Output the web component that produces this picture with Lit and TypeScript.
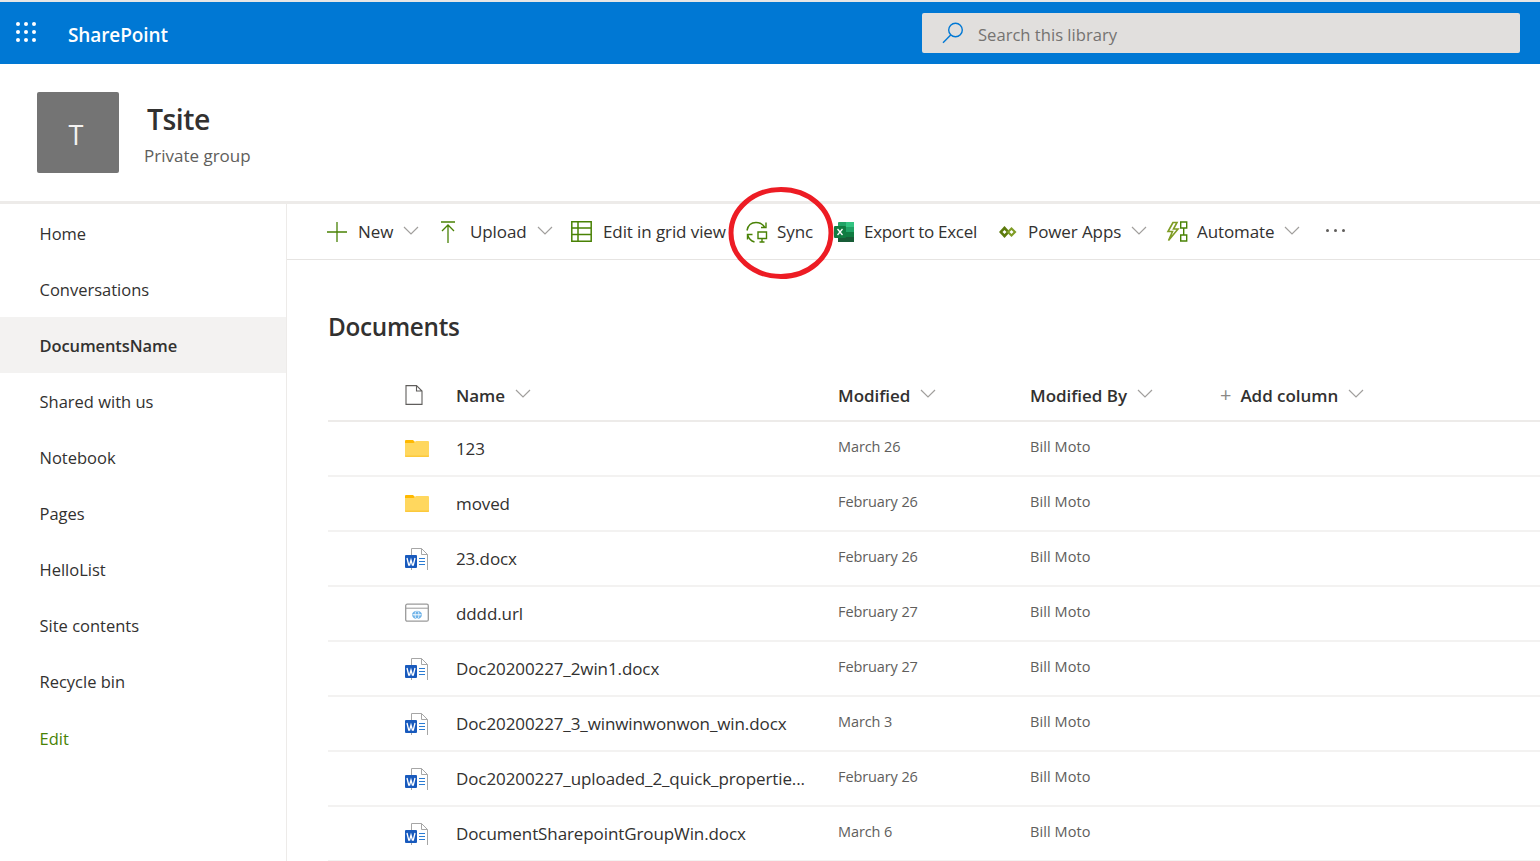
import { LitElement, html, css, svg } from 'lit';
import { customElement } from 'lit/decorators.js';

const NAV = ['Home', 'Conversations', 'DocumentsName', 'Shared with us', 'Notebook', 'Pages', 'HelloList', 'Site contents', 'Recycle bin'];

const ROWS = [
  { icon: 'folder', name: '123', modified: 'March 26' },
  { icon: 'folder', name: 'moved', modified: 'February 26' },
  { icon: 'word', name: '23.docx', modified: 'February 26' },
  { icon: 'url', name: 'dddd.url', modified: 'February 27' },
  { icon: 'word', name: 'Doc20200227_2win1.docx', modified: 'February 27' },
  { icon: 'word', name: 'Doc20200227_3_winwinwonwon_win.docx', modified: 'March 3' },
  { icon: 'word', name: 'Doc20200227_uploaded_2_quick_propertie...', modified: 'February 26' },
  { icon: 'word', name: 'DocumentSharepointGroupWin.docx', modified: 'March 6' },
];

const chevron = html`<svg class="chev" width="16" height="9" viewBox="0 0 16 9" fill="none" stroke="#a19f9d" stroke-width="1.2"><path d="M1 1l7 7 7-7"/></svg>`;

const fileIcons: Record<string, unknown> = {
  folder: svg`<path d="M0 4V3a1 1 0 0 1 1-1h7l3 3v2H0z" fill="#ffb900"/><path d="M0 5h8.500l2.500-2h12a1 1 0 0 1 1 1v14a1 1 0 0 1-1 1H1a1 1 0 0 1-1-1z" fill="#ffd75e"/><path d="M0 17.500h24V18a1 1 0 0 1-1 1H1a1 1 0 0 1-1-1z" fill="#fcc93c"/>`,
  word: svg`<path d="M6.500.500h10l6 6v16h-16z" fill="#fff" stroke="#a6a6a6"/><path d="M16.500.500v6h6" fill="none" stroke="#a6a6a6"/><path d="M14 10.500h6M14 13.500h6M14 16.500h6" stroke="#2b7cd3" stroke-width="1.200"/><rect x="0" y="7" width="12" height="13" rx="1" fill="#185abd"/><path d="M2 10l1.700 7h.9L6 12l1.400 5h.9L10 10" fill="none" stroke="#fff" stroke-width="1.300"/>`,
  url: svg`<rect x=".7" y="1.200" width="22.600" height="17" rx="1.500" fill="#fff" stroke="#9a9a9a" stroke-width="1.300"/><path d="M1 5.200h22" stroke="#9a9a9a"/><ellipse cx="12" cy="11.800" rx="5" ry="4" fill="#6db2e8"/><path d="M7.500 11.800h9" stroke="#fff"/><ellipse cx="12" cy="11.800" rx="2" ry="4" fill="none" stroke="#fff" stroke-width=".7"/>`,
};

@customElement('app-root')
export class AppRoot extends LitElement {
  static override styles = css`
    :host {
      display: block;
      height: 861px;
      overflow: hidden;
      position: relative;
      background: #fff;
      color: #323130;
      font-family: 'Open Sans', 'Liberation Sans', sans-serif;
    }
    svg { display: block; flex: none; }
    .suite {
      height: 62px;
      margin-top: 2px;
      background: #0078d4;
      box-shadow: 0 -2px 0 #e6e6e6;
      display: flex;
      align-items: center;
      color: #fff;
    }
    .waffle {
      margin-left: 16px;
      display: grid;
      grid-template-columns: repeat(3, 4px);
      gap: 4px;
      margin-top: -3px;
    }
    .waffle i { width: 4px; height: 4px; border-radius: 50%; background: #fff; }
    .brand { margin-left: 32px; margin-top: 3px; font-size: 19px; font-weight: 600; letter-spacing: -0.1px; }
    .search {
      margin-left: auto;
      margin-right: 20px;
      width: 598px;
      height: 40px;
      border-radius: 2px;
      background: #e1dfdd;
      display: flex;
      align-items: center;
      padding-left: 20px;
      box-sizing: border-box;
      gap: 14px;
      font-size: 16.6px;
      color: #757371;
    }
    .search span { margin-top: 2px; }
    .site {
      height: 137px;
      display: flex;
      align-items: center;
      padding-left: 37px;
      box-sizing: border-box;
    }
    .logo {
      width: 82px;
      height: 81px;
      border-radius: 2px;
      background: #747474;
      color: #f3f2f1;
      display: flex;
      align-items: center;
      justify-content: center;
      box-sizing: border-box;
      padding: 4px 4px 0 0;
      font-size: 27px;
    }
    .site-text { margin-left: 25px; margin-top: 6px; }
    .site-name { font-size: 28.4px; font-weight: 600; line-height: 40px; margin-left: 3px; letter-spacing: -0.5px; }
    .site-sub { font-size: 17px; line-height: 33px; color: #605e5c; }
    .body {
      display: flex;
      border-top: 3px solid #edebe9;
      height: 660px;
    }
    .nav { width: 286px; flex: none; border-right: 1px solid #edebe9; padding-top: 1px; }
    .nav-item {
      height: 56.1px;
      display: flex;
      align-items: center;
      padding-left: 39.500px;
      font-size: 16.5px;
    }
    .nav-item.active { background: #f3f2f1; font-weight: 600; letter-spacing: -0.1px; }
    .nav-item.edit { color: #498205; margin-top: 1px; }
    .main { flex: 1; min-width: 0; }
    .commands {
      height: 56px;
      box-sizing: border-box;
      border-bottom: 1px solid #e6e4e2;
      display: flex;
      align-items: center;
      padding-left: 40px;
      font-size: 17px;
      letter-spacing: -0.1px;
      white-space: nowrap;
    }
    .cmd { display: flex; align-items: center; flex: none; }
    .cmd .label { margin-left: 11px; }
    .cmd .chev { margin-left: 10px; margin-top: -2px; }
    .c-new { width: 113px; }
    .c-upload { width: 131px; }
    .c-upload .label { margin-left: 14px; }
    .c-grid { width: 175px; }
    .c-sync { width: 88px; }
    .c-sync .label { margin-left: 9px; }
    .c-excel { width: 165px; }
    .c-excel .label { margin-left: 10px; letter-spacing: -0.3px; }
    .c-apps { width: 167px; }
    .c-auto { width: 160px; }
    .c-auto .label { margin-left: 9px; }
    .dots { display: flex; gap: 5px; margin-top: -2px; }
    .dots i { width: 3px; height: 3px; border-radius: 50%; background: #605e5c; }
    .content { padding-left: 41px; }
    h1 { margin: 0; font-size: 24.3px; font-weight: 600; height: 110px; box-sizing: border-box; padding-top: 49px; line-height: 36px; letter-spacing: -0.3px; }
    .row {
      display: grid;
      grid-template-columns: 77px 51px 382px 192px 190px 1fr;
      align-items: center;
      height: 55px;
      border-bottom: 2px solid #f3f2f1;
      box-sizing: border-box;
    }
    .row.head { height: 52px; border-bottom-color: #edebe9; font-size: 17px; font-weight: 600; }
    .row.head .cell { display: flex; align-items: center; gap: 10px; letter-spacing: -0.03px; }
    .row.head .chev { margin-top: -3px; }
    .plus { font-weight: 400; color: #8a8886; margin-right: -1px; font-size: 20px; line-height: 1; }
    .name { grid-column: 3; font-size: 17px; white-space: nowrap; letter-spacing: -0.1px; }
    .meta { font-size: 14.5px; color: #605e5c; letter-spacing: -0.1px; padding-bottom: 4px; }
    .by { letter-spacing: 0.1px; }
    .row .icon { grid-column: 2; }
    .ring { position: absolute; left: 724.500px; top: 184px; pointer-events: none; }
  `;

  private renderNav() {
    return html`<nav class="nav">
      ${NAV.map((n) => html`<div class="nav-item ${n === 'DocumentsName' ? 'active' : ''}">${n}</div>`)}
      <div class="nav-item edit">Edit</div>
    </nav>`;
  }

  private renderCommands() {
    return html`<div class="commands">
      <div class="cmd c-new">
        <svg width="20" height="20" viewBox="0 0 20 20" stroke="#498205" stroke-width="1.300"><path d="M10 0v20M0 10h20"/></svg>
        <span class="label">New</span>${chevron}
      </div>
      <div class="cmd c-upload">
        <svg width="16" height="22" viewBox="0 0 16 22" fill="none" stroke="#498205" stroke-width="1.300"><path d="M1 1h14M8 22V4M2 10l6-6 6 6"/></svg>
        <span class="label">Upload</span>${chevron}
      </div>
      <div class="cmd c-grid">
        <svg width="21" height="21" viewBox="0 0 21 21" fill="none" stroke="#498205" stroke-width="1.500"><path d="M.8.8h19.400v19.400H.8zM.8 7h19.400M.8 13.500h19.400M7 .8v19.400"/></svg>
        <span class="label">Edit in grid view</span>
      </div>
      <div class="cmd c-sync">
        <svg width="22" height="22" viewBox="0 0 22 22" fill="none" stroke="#498205" stroke-width="1.400"><path d="M1 9.500C2 4 6 1.500 10 1.500c3.500 0 6.500 1.500 8.500 4.500M20 1.500V6.500h-5M6.500 13.500H1.500v5M1.500 13.500c1 3.500 3.500 6.500 7 7.500"/><path d="M12 11h8.500v6.500H12zM16 17.500v3M13.500 21h5"/></svg>
        <span class="label">Sync</span>
      </div>
      <div class="cmd c-excel">
        <svg width="20" height="20" viewBox="0 0 20 20">
          <rect x="4" y="0" width="16" height="20" rx="1" fill="#21a366"/>
          <rect x="12" y="0" width="8" height="5" fill="#33c481"/>
          <rect x="12" y="5" width="8" height="5" fill="#21a366"/>
          <rect x="4" y="10" width="8" height="10" fill="#185c37"/>
          <rect x="12" y="10" width="8" height="5" fill="#107c41"/>
          <rect x="12" y="15" width="8" height="5" fill="#185c37"/>
          <rect x="0" y="4" width="12" height="12" rx="1" fill="#107c41"/>
          <path d="M3.500 7l5 6M8.500 7l-5 6" stroke="#fff" stroke-width="1.300"/>
        </svg>
        <span class="label">Export to Excel</span>
      </div>
      <div class="cmd c-apps">
        <svg width="18" height="12" viewBox="0 0 18 12">
          <path d="M5.500 0l5.500 6-5.500 6L0 6z" fill="#5c7a0c"/><path d="M12.500 1l5 5-5 5-5-5z" fill="#7f9c25"/><path d="M5.500 4l2 2-2 2-2-2zM12.500 4l2 2-2 2-2-2z" fill="#fff"/>
        </svg>
        <span class="label">Power Apps</span>${chevron}
      </div>
      <div class="cmd c-auto">
        <svg width="22" height="21" viewBox="0 0 22 21" fill="none" stroke="#498205" stroke-width="1.400"><path d="M7 1.500L2 10.500h4.500L2.500 19.500 12 8H7.500L11 1.500z" stroke="#7f9c25" stroke-width="1.600"/><path d="M14.700 1h6v6h-6zM14.700 14h6v6h-6zM17.700 7v7"/></svg>
        <span class="label">Automate</span>${chevron}
      </div>
      <div class="dots"><i></i><i></i><i></i></div>
    </div>`;
  }

  private renderTable() {
    return html`<div class="row head">
        <span></span>
        <svg class="icon" width="18" height="20" viewBox="0 0 18 20" fill="#fff" stroke="#605e5c" stroke-width="1.100"><path d="M1 .6h10.500L17 6v13.400H1zM11.500.6V6H17"/></svg>
        <div class="cell">Name ${chevron}</div>
        <div class="cell">Modified ${chevron}</div>
        <div class="cell">Modified By ${chevron}</div>
        <div class="cell"><span class="plus">+</span> Add column ${chevron}</div>
      </div>
      ${ROWS.map(
        (r) => html`<div class="row">
          <svg class="icon" width="24" height="22" viewBox="0 0 24 22">${fileIcons[r.icon]}</svg>
          <span class="name">${r.name}</span>
          <span class="meta">${r.modified}</span>
          <span class="meta by">Bill Moto</span>
        </div>`
      )}`;
  }

  protected override render() {
    return html`
      <header class="suite">
        <div class="waffle">${Array.from({ length: 9 }, () => html`<i></i>`)}</div>
        <div class="brand">SharePoint</div>
        <div class="search">
          <svg width="22" height="22" viewBox="0 0 22 22" fill="none" stroke="#0078d4" stroke-width="1.400"><circle cx="13.500" cy="8" r="6.800"/><path d="M8.700 13L1 20.800"/></svg>
          <span>Search this library</span>
        </div>
      </header>
      <section class="site">
        <div class="logo">T</div>
        <div class="site-text">
          <div class="site-name">Tsite</div>
          <div class="site-sub">Private group</div>
        </div>
      </section>
      <div class="body">
        ${this.renderNav()}
        <div class="main">
          ${this.renderCommands()}
          <div class="content">
            <h1>Documents</h1>
            ${this.renderTable()}
          </div>
        </div>
      </div>
      <svg class="ring" width="112" height="98" viewBox="0 0 112 98" fill="none" stroke="#ed1c24" stroke-width="5"><ellipse cx="56" cy="49" rx="50" ry="43.500"/></svg>
    `;
  }
}
